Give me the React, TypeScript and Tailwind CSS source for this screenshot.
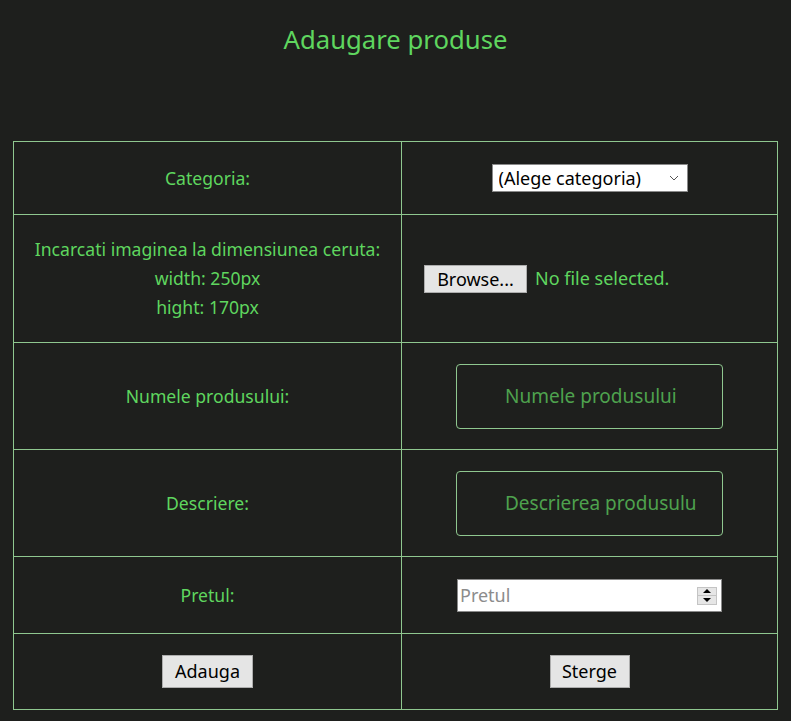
import React from 'react';

const cell = 'border border-[#8fc78f] text-center align-middle';

export default function App() {
  return (
    <div className="min-h-[721px] w-full bg-[#1e1f1d] pt-[23px] font-['Noto_Sans',sans-serif] text-[#5fd65f]">
      <h1 className="text-center text-[25.7px] leading-[34px]">Adaugare produse</h1>

      <table className="mx-[13px] mt-[84px] w-[765px] border-collapse text-[17.6px]">
        <tbody>
          <tr className="h-[73px]">
            <td className={cell + ' w-[388px]'}>Categoria:</td>
            <td className={cell}>
              <div className="relative mx-auto h-[28px] w-[196px] border border-[#8a8a8a] bg-white text-left">
                <select className="h-full w-full appearance-none bg-transparent pl-[6px] text-[18px] leading-[26px] text-black outline-none">
                  <option>(Alege categoria)</option>
                </select>
                <svg viewBox="0 0 10 6" className="pointer-events-none absolute right-[8px] top-[10px] h-[6px] w-[10px]">
                  <path d="M1 1l4 4 4-4" fill="none" stroke="#555" strokeWidth="1" />
                </svg>
              </div>
            </td>
          </tr>
          <tr className="h-[128px]">
            <td className={cell + ' leading-[29px]'}>
              Incarcati imaginea la dimensiunea ceruta:
              <br />
              width: 250px
              <br />
              hight: 170px
            </td>
            <td className={cell + ' text-left'}>
              <div className="flex items-center gap-[8px] pl-[22px]">
                <button className="h-[28px] w-[103px] border border-[#adadad] bg-[#e5e5e5] text-[18px] text-black">
                  Browse...
                </button>
                <span className="text-[18px]">No file selected.</span>
              </div>
            </td>
          </tr>
          <tr className="h-[107px]">
            <td className={cell}>Numele produsului:</td>
            <td className={cell}>
              <input
                placeholder="Numele produsului"
                className="h-[65px] w-[267px] rounded-[4px] border border-[#8fc78f] bg-transparent pl-[48px] pr-[25px] text-[19px] outline-none placeholder:text-[#4ea24e]"
              />
            </td>
          </tr>
          <tr className="h-[107px]">
            <td className={cell}>Descriere:</td>
            <td className={cell}>
              <input
                placeholder="Descrierea produsului"
                className="h-[65px] w-[267px] rounded-[4px] border border-[#8fc78f] bg-transparent pl-[48px] pr-[25px] text-[19px] outline-none placeholder:text-[#4ea24e]"
              />
            </td>
          </tr>
          <tr className="h-[77px]">
            <td className={cell}>Pretul:</td>
            <td className={cell}>
              <div className="relative mx-auto h-[33px] w-[265px] border border-[#8a8a8a] bg-white">
                <input
                  placeholder="Pretul"
                  className="h-full w-full bg-transparent pl-[2px] text-[18px] text-black outline-none placeholder:text-[#8c8c8c]"
                />
                <div className="pointer-events-none absolute right-[4px] top-[7px] flex h-[18px] w-[20px] flex-col border border-[#c4c4c4] bg-[#e6e6e6]">
                  <div className="flex flex-1 items-center justify-center border-b border-[#c4c4c4]">
                    <div className="h-0 w-0 border-x-[4px] border-b-[4px] border-x-transparent border-b-black" />
                  </div>
                  <div className="flex flex-1 items-center justify-center">
                    <div className="h-0 w-0 border-x-[4px] border-t-[4px] border-x-transparent border-t-black" />
                  </div>
                </div>
              </div>
            </td>
          </tr>
          <tr className="h-[76px]">
            <td className={cell}>
              <button className="h-[33px] w-[91px] border border-[#adadad] bg-[#e5e5e5] text-[18px] text-black">
                Adauga
              </button>
            </td>
            <td className={cell}>
              <button className="h-[33px] w-[80px] border border-[#adadad] bg-[#e5e5e5] text-[18px] text-black">
                Sterge
              </button>
            </td>
          </tr>
        </tbody>
      </table>
    </div>
  );
}
